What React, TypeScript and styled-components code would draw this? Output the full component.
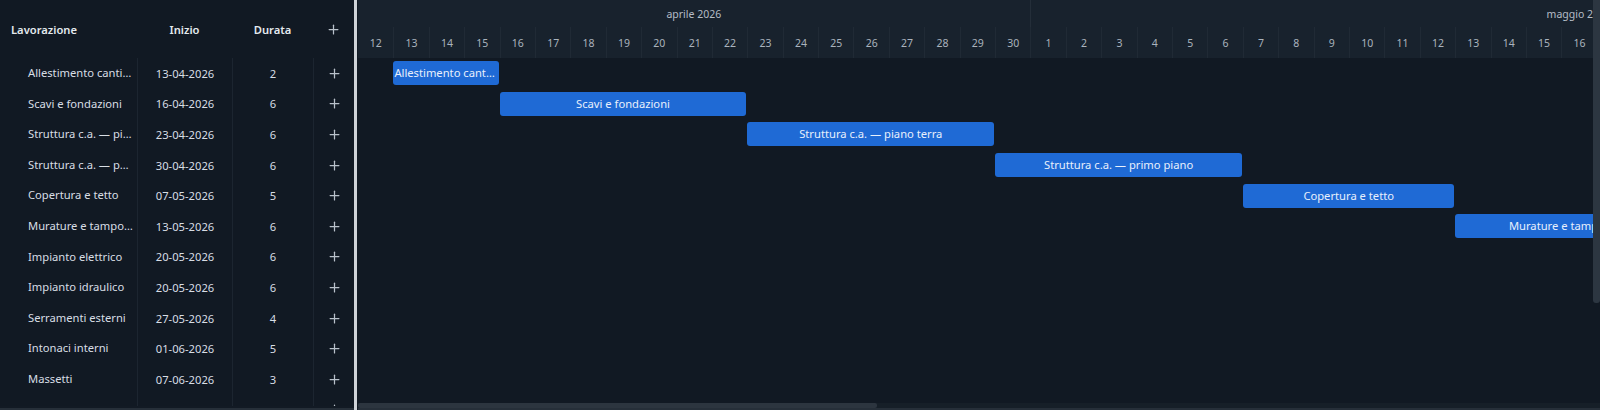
import React, { FC } from 'react'
import styled, { createGlobalStyle } from 'styled-components'
import { FiPlus } from 'react-icons/fi'

const COL = 35.4
const ROW = 30.6
const START = new Date(2026, 3, 12)
const TOTAL_DAYS = 89

interface Task {
  name: string
  start: string
  duration: number
}

const tasks: Task[] = [
  { name: 'Allestimento cantiere', start: '13-04-2026', duration: 2 },
  { name: 'Scavi e fondazioni', start: '16-04-2026', duration: 6 },
  { name: 'Struttura c.a. — piano terra', start: '23-04-2026', duration: 6 },
  { name: 'Struttura c.a. — primo piano', start: '30-04-2026', duration: 6 },
  { name: 'Copertura e tetto', start: '07-05-2026', duration: 5 },
  { name: 'Murature e tamponamenti', start: '13-05-2026', duration: 6 },
  { name: 'Impianto elettrico', start: '20-05-2026', duration: 6 },
  { name: 'Impianto idraulico', start: '20-05-2026', duration: 6 },
  { name: 'Serramenti esterni', start: '27-05-2026', duration: 4 },
  { name: 'Intonaci interni', start: '01-06-2026', duration: 5 },
  { name: 'Massetti', start: '07-06-2026', duration: 3 },
  { name: 'Pavimenti e rivestimenti', start: '11-06-2026', duration: 5 },
]

const MONTHS = ['gennaio', 'febbraio', 'marzo', 'aprile', 'maggio', 'giugno', 'luglio', 'agosto', 'settembre', 'ottobre', 'novembre', 'dicembre']

const parse = (s: string) => {
  const [d, m, y] = s.split('-').map(Number)
  return new Date(y, m - 1, d)
}
const offsetDays = (s: string) => Math.round((parse(s).getTime() - START.getTime()) / 86400000)

const days = Array.from({ length: TOTAL_DAYS }, (_, i) => {
  const d = new Date(START)
  d.setDate(START.getDate() + i)
  return d
})

const months: { label: string; count: number }[] = []
days.forEach((d) => {
  const label = `${MONTHS[d.getMonth()]} ${d.getFullYear()}`
  const last = months[months.length - 1]
  if (last && last.label === label) last.count++
  else months.push({ label, count: 1 })
})

const GlobalStyle = createGlobalStyle`
  html, body { margin: 0; padding: 0; background: #111923; }
  body { font-family: "Noto Sans", "Open Sans", sans-serif; }
  * { box-sizing: border-box; }
`

const App: FC = () => {
  return (
    <>
      <GlobalStyle />
      <Gantt>
        <GridPanel>
          <GridHeader>
            <HeadCell align="left">Lavorazione</HeadCell>
            <HeadCell>Inizio</HeadCell>
            <HeadCell>Durata</HeadCell>
            <HeadCell><FiPlus size={15} /></HeadCell>
          </GridHeader>
          <GridBody>
            {tasks.map((t) => (
              <GridRow key={t.name}>
                <NameCell>{t.name}</NameCell>
                <Cell>{t.start}</Cell>
                <Cell>{t.duration}</Cell>
                <Cell><FiPlus size={15} /></Cell>
              </GridRow>
            ))}
          </GridBody>
          <GridFooter />
        </GridPanel>
        <Resizer />
        <ChartPanel>
          <ChartMain>
            <Viewport>
              <Timeline style={{ width: TOTAL_DAYS * COL }}>
                <ScaleHeader>
                  <MonthRow>
                    {months.map((m) => (
                      <MonthCell key={m.label} style={{ width: m.count * COL }}>
                        {m.label}
                      </MonthCell>
                    ))}
                  </MonthRow>
                  <DayRow>
                    {days.map((d, i) => (
                      <DayCell key={i} first={i === 0}>{d.getDate()}</DayCell>
                    ))}
                  </DayRow>
                </ScaleHeader>
                <BarArea>
                  {tasks.map((t) => (
                    <BarRow key={t.name}>
                      <Bar style={{ marginLeft: offsetDays(t.start) * COL, width: (t.duration + 1) * COL - 1 }}>
                        {t.name}
                      </Bar>
                    </BarRow>
                  ))}
                </BarArea>
              </Timeline>
            </Viewport>
            <VTrack>
              <VThumb />
            </VTrack>
          </ChartMain>
          <HTrack>
            <HThumb />
          </HTrack>
        </ChartPanel>
      </Gantt>
    </>
  )
}

export default App

const Gantt = styled.div`
  display: flex;
  width: 1600px;
  height: 410px;
  overflow: hidden;
  background: #111923;
  color: #dbe1e8;
  font-size: 11.2px;
`

const GridPanel = styled.div`
  width: 354px;
  display: flex;
  flex-direction: column;
  flex-shrink: 0;
`

const columns = '137px 95px 81px 41px'

const GridHeader = styled.div`
  display: grid;
  grid-template-columns: ${columns};
  height: 58px;
  flex-shrink: 0;
`

const HeadCell = styled.div<{ align?: 'left' | 'center' }>`
  display: flex;
  align-items: center;
  justify-content: ${(p) => (p.align === 'left' ? 'flex-start' : 'center')};
  padding-left: ${(p) => (p.align === 'left' ? '11px' : '0')};
  font-weight: 600;
  color: #e4e9ee;
  svg { color: #b9c1ca; }
`

const GridBody = styled.div`
  flex: 1;
  overflow: hidden;
`

const GridRow = styled.div`
  display: grid;
  grid-template-columns: ${columns};
  height: ${ROW}px;
`

const Cell = styled.div`
  display: flex;
  align-items: center;
  justify-content: center;
  border-left: 1px solid #1c2530;
  color: #d8dee5;
  svg { color: #b9c1ca; }
`

const NameCell = styled.div`
  padding-left: 28px;
  padding-right: 4px;
  line-height: ${ROW}px;
  white-space: nowrap;
  overflow: hidden;
  text-overflow: ellipsis;
  color: #d8dee5;
`

const GridFooter = styled.div`
  height: 4px;
  flex-shrink: 0;
  background: #121a24;
  border-bottom: 2px solid #262f39;
`

const Resizer = styled.div`
  width: 4px;
  flex-shrink: 0;
  background: #cfd3d8;
  border-right: 1px solid #111923;
`

const ChartPanel = styled.div`
  flex: 1;
  min-width: 0;
  display: flex;
  flex-direction: column;
`

const ChartMain = styled.div`
  flex: 1;
  min-height: 0;
  display: flex;
`

const Viewport = styled.div`
  flex: 1;
  min-width: 0;
  overflow: hidden;
`

const Timeline = styled.div`
  display: flex;
  flex-direction: column;
`

const ScaleHeader = styled.div`
  background: #18222d;
  height: 58px;
`

const MonthRow = styled.div`
  display: flex;
  height: 27px;
`

const MonthCell = styled.div`
  flex-shrink: 0;
  display: flex;
  align-items: center;
  justify-content: center;
  font-size: 10.5px;
  color: #b4bcc6;
  border-right: 1px solid #242e39;
  white-space: nowrap;
`

const DayRow = styled.div`
  display: flex;
  height: 31px;
`

const DayCell = styled.div<{ first: boolean }>`
  width: ${COL}px;
  flex-shrink: 0;
  display: flex;
  align-items: center;
  justify-content: center;
  font-size: 10.5px;
  color: #aab3bd;
  border-left: ${(p) => (p.first ? 'none' : '1px solid #202a35')};
`

const BarArea = styled.div`
  display: flex;
  flex-direction: column;
`

const BarRow = styled.div`
  height: ${ROW}px;
  display: flex;
  align-items: center;
`

const Bar = styled.div`
  flex-shrink: 0;
  height: 24px;
  border-radius: 3px;
  background: #1f6ad5;
  color: #e8f0fc;
  font-size: 11.2px;
  line-height: 24px;
  text-align: center;
  padding: 0 1px;
  white-space: nowrap;
  overflow: hidden;
  text-overflow: ellipsis;
`

const VTrack = styled.div`
  width: 7px;
  flex-shrink: 0;
  background: #111923;
`

const VThumb = styled.div`
  height: 303px;
  background: #2c3641;
  border-radius: 0 0 3px 3px;
`

const HTrack = styled.div`
  height: 7px;
  flex-shrink: 0;
  background: #161f28;
  border-bottom: 2px solid #262f39;
`

const HThumb = styled.div`
  width: 519px;
  height: 5px;
  background: #2c353f;
  border-radius: 2px;
`
